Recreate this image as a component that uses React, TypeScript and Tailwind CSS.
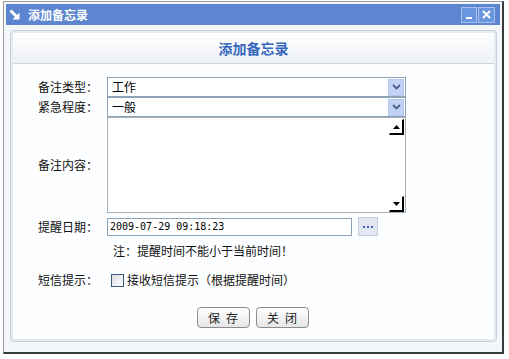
const cjk = "font-['SimSun','Noto_Sans_CJK_SC',sans-serif]";

const Chevron = () => (
  <svg width="9" height="6" viewBox="0 0 9 6">
    <polyline points="1,1 4.5,4.5 8,1" fill="none" stroke="#4a5f8e" strokeWidth="1.8" />
  </svg>
);

const SelectBox = ({ value }: { value: string }) => (
  <div className="flex-1 h-[20px] border border-[#8fa3b8] bg-white flex items-center">
    <span className="flex-1 pl-[4px] text-[12px] text-black leading-none">{value}</span>
    <div className="w-[16px] h-[17px] mr-[1px] bg-[#c3d3f5] border border-[#b3c5ec] flex items-center justify-center">
      <Chevron />
    </div>
  </div>
);

const ScrollBtn = ({ up }: { up?: boolean }) => (
  <div className="w-[15px] h-[16px] bg-white border-t border-l border-t-white border-l-white border-r-2 border-b-2 border-r-black border-b-black flex items-center justify-center">
    <svg width="7" height="4" viewBox="0 0 7 4">
      {up ? <polygon points="3.5,0 7,4 0,4" fill="#000" /> : <polygon points="0,0 7,0 3.5,4" fill="#000" />}
    </svg>
  </div>
);

const Label = ({ children }: { children: string }) => (
  <div className="w-[69px] shrink-0 text-[12px] text-[#111] leading-none">{children}</div>
);

const PlainButton = ({ children }: { children: string }) => (
  <button className="w-[53px] h-[21px] rounded-[4px] border border-[#8c8c8c] bg-gradient-to-b from-white to-[#e6e6e6] text-[12px] text-[#222] leading-none tracking-[6px] pl-[6px]">
    {children}
  </button>
);

export default function App() {
  return (
    <div className={`w-[509px] h-[359px] bg-white overflow-hidden pl-[3px] pt-[1px] ${cjk}`}>
      <div className="w-[501px] h-[353px] border-l border-t border-[#9a9a9a] border-r-2 border-b-2 border-r-[#3a3a3a] border-b-[#3a3a3a] bg-[#f3f6fa] px-[2px] pt-[2px]">
        {/* title bar */}
        <div className="h-[21px] bg-[#5c86cf] flex items-center pl-[3px] pr-[5px]">
          <svg width="12" height="12" viewBox="0 0 12 12" className="mr-[7px]">
            <line x1="1.5" y1="1.5" x2="8" y2="8" stroke="#fff" strokeWidth="3" />
            <polygon points="10.5,3.5 10.5,10.5 3.5,10.5" fill="#fff" />
          </svg>
          <span className="text-white font-bold text-[12px] leading-none">添加备忘录</span>
          <div className="flex-1" />
          <div className="w-[16px] h-[16px] bg-[#6a95df] border border-[#a9c1ec] flex items-end justify-center pb-[3px]">
            <div className="w-[6px] h-[2px] bg-white" />
          </div>
          <div className="w-[17px] h-[16px] ml-[1px] bg-[#6a95df] border border-[#a9c1ec] flex items-center justify-center">
            <svg width="9" height="9" viewBox="0 0 9 9">
              <path d="M1 1 L8 8 M8 1 L1 8" stroke="#fff" strokeWidth="2" />
            </svg>
          </div>
        </div>

        {/* panel */}
        <div className="mt-[5px] ml-[4px] w-[487px] h-[312px] rounded-[4px] border border-[#c7d1dc] shadow-[inset_0_0_0_2px_#e6ebf1] bg-[#fdfeff] p-[2px]">
          <div className="h-[31px] bg-gradient-to-b from-white to-[#eef1f5] border-b border-[#c9d5e2] flex items-center justify-center">
            <span className="text-[14px] font-bold text-[#3868bd] leading-none">添加备忘录</span>
          </div>

          <div className="pl-[25px] pr-[88px] pt-[13px]">
            <div className="flex items-center h-[20px]">
              <Label>备注类型：</Label>
              <SelectBox value="工作" />
            </div>
            <div className="flex items-center h-[20px]">
              <Label>紧急程度：</Label>
              <SelectBox value="一般" />
            </div>
            <div className="flex items-center h-[96px]">
              <Label>备注内容：</Label>
              <div className="flex-1 h-[96px] border border-[#a7afb9] bg-white flex justify-end pr-[1px] pt-[1px]">
                <div className="flex flex-col justify-between h-[93px]">
                  <ScrollBtn up />
                  <ScrollBtn />
                </div>
              </div>
            </div>
            <div className="flex items-center h-[19px] mt-[4px]">
              <Label>提醒日期：</Label>
              <div className="w-[245px] h-[18px] border border-[#8fa3b8] bg-white flex items-center pl-[2px]">
                <span className="font-['DejaVu_Sans_Mono',monospace] text-[10px] text-black leading-none">2009-07-29 09:18:23</span>
              </div>
              <div className="ml-[6px] w-[20px] h-[19px] bg-[#e1e8f3] border border-[#c6ced9] flex items-center justify-center">
                <svg width="10" height="2" viewBox="0 0 10 2">
                  <rect x="0" y="0" width="2" height="2" fill="#3f66b0" />
                  <rect x="4" y="0" width="2" height="2" fill="#3f66b0" />
                  <rect x="8" y="0" width="2" height="2" fill="#3f66b0" />
                </svg>
              </div>
            </div>
            <div className="h-[14px] mt-[8px] pl-[75px] flex items-center text-[12px] text-[#111] leading-none">
              注：提醒时间不能小于当前时间！
            </div>
            <div className="flex items-center h-[14px] mt-[15px]">
              <Label>短信提示：</Label>
              <div className="ml-[4px] w-[13px] h-[13px] border border-[#3a5a7e] bg-gradient-to-br from-[#d9dde2] to-white" />
              <span className="ml-[3px] text-[12px] text-[#111] leading-none">接收短信提示（根据提醒时间）</span>
            </div>
          </div>

          <div className="flex justify-center gap-[6px] mt-[20px] pr-[2px]">
            <PlainButton>保存</PlainButton>
            <PlainButton>关闭</PlainButton>
          </div>
        </div>
      </div>
    </div>
  );
}
